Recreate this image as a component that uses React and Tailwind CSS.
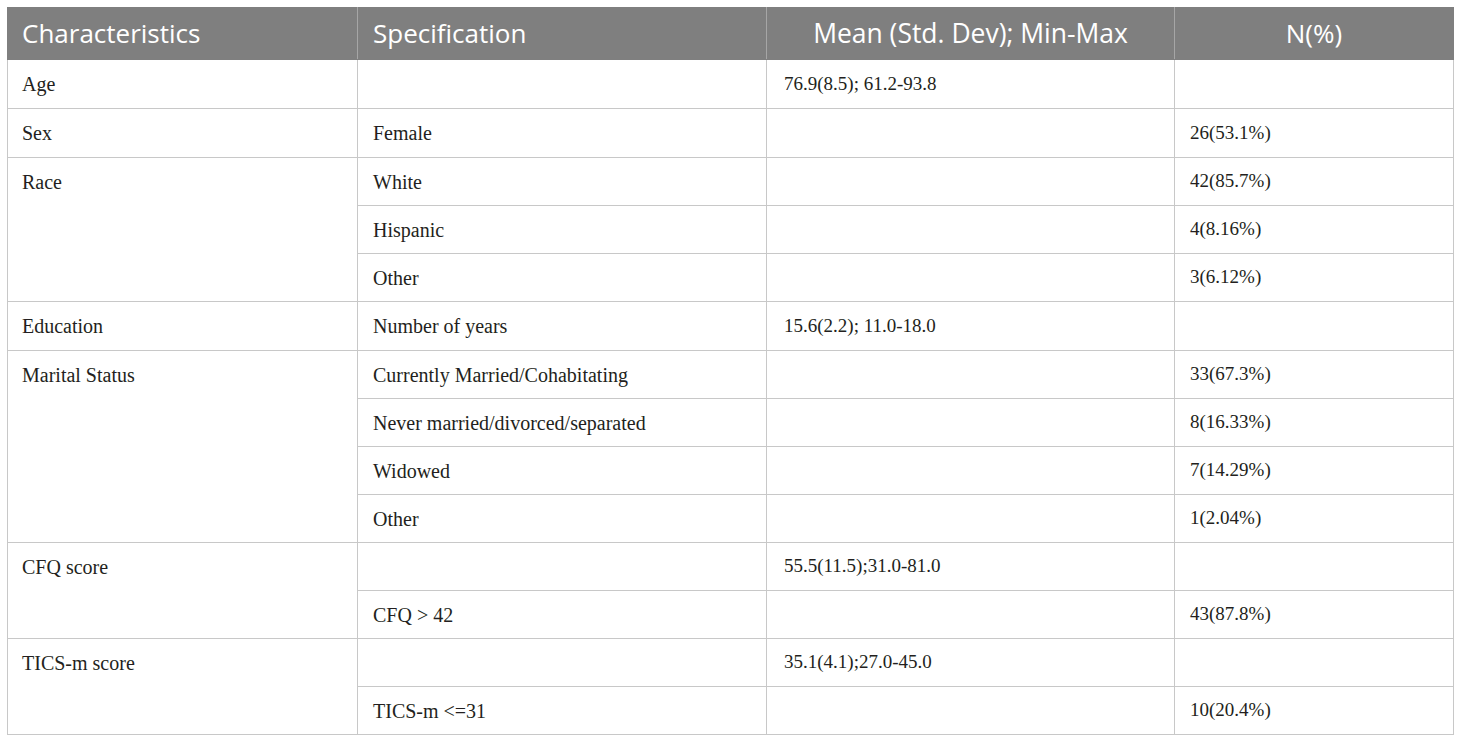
import React from "react";

const rows = [
  { group: "Age", span: 1, spec: "", mean: "76.9(8.5); 61.2-93.8", n: "" },
  { group: "Sex", span: 1, spec: "Female", mean: "", n: "26(53.1%)" },
  { group: "Race", span: 3, spec: "White", mean: "", n: "42(85.7%)" },
  { spec: "Hispanic", mean: "", n: "4(8.16%)" },
  { spec: "Other", mean: "", n: "3(6.12%)" },
  { group: "Education", span: 1, spec: "Number of years", mean: "15.6(2.2); 11.0-18.0", n: "" },
  { group: "Marital Status", span: 4, spec: "Currently Married/Cohabitating", mean: "", n: "33(67.3%)" },
  { spec: "Never married/divorced/separated", mean: "", n: "8(16.33%)" },
  { spec: "Widowed", mean: "", n: "7(14.29%)" },
  { spec: "Other", mean: "", n: "1(2.04%)" },
  { group: "CFQ score", span: 2, spec: "", mean: "55.5(11.5);31.0-81.0", n: "" },
  { spec: "CFQ > 42", mean: "", n: "43(87.8%)" },
  { group: "TICS-m score", span: 2, spec: "", mean: "35.1(4.1);27.0-45.0", n: "" },
  { spec: "TICS-m <=31", mean: "", n: "10(20.4%)" },
];

const td = "border border-[#c8c8c8] h-[48px] align-middle py-0";

const App = () => {
  return (
    <div className="bg-white w-[1460px] h-[743px] pt-[7px] pl-[7px]">
      <table
        className="table-fixed border-collapse w-[1446px] text-[#231f20]"
        style={{ fontFamily: '"Liberation Serif", serif' }}
      >
        <colgroup>
          <col className="w-[350px]" />
          <col className="w-[409px]" />
          <col className="w-[408px]" />
          <col className="w-[279px]" />
        </colgroup>
        {/* Header */}
        <thead>
          <tr className="bg-[#7f7f7f] text-white text-[26px] font-['Open_Sans',sans-serif]">
            <th className="h-[52px] border border-[#7f7f7f] border-r-[#a6a6a6] text-left font-normal pl-[14px]">Characteristics</th>
            <th className="border border-[#7f7f7f] border-r-[#a6a6a6] text-left font-normal pl-[15px]">Specification</th>
            <th className="border border-[#7f7f7f] border-r-[#a6a6a6] text-center font-normal">
              <span className="inline-block text-[28px] scale-x-[0.945] leading-none">Mean (Std. Dev); Min-Max</span>
            </th>
            <th className="border border-[#7f7f7f] text-center font-normal">N(%)</th>
          </tr>
        </thead>
        <tbody>
          {rows.map((r, i) => (
            <tr key={i}>
              {r.group !== undefined && (
                <td rowSpan={r.span} className={`${td} pl-[14px] align-top text-[20px]`}>
                  <div className="h-[48px] flex items-center">{r.group}</div>
                </td>
              )}
              <td className={`${td} pl-[15px] text-[20px]`}>{r.spec}</td>
              <td className={`${td} pl-[17px] text-[19px]`}>{r.mean}</td>
              <td className={`${td} pl-[15px] text-[19px]`}>{r.n}</td>
            </tr>
          ))}
        </tbody>
      </table>
    </div>
  );
};

export default App;
